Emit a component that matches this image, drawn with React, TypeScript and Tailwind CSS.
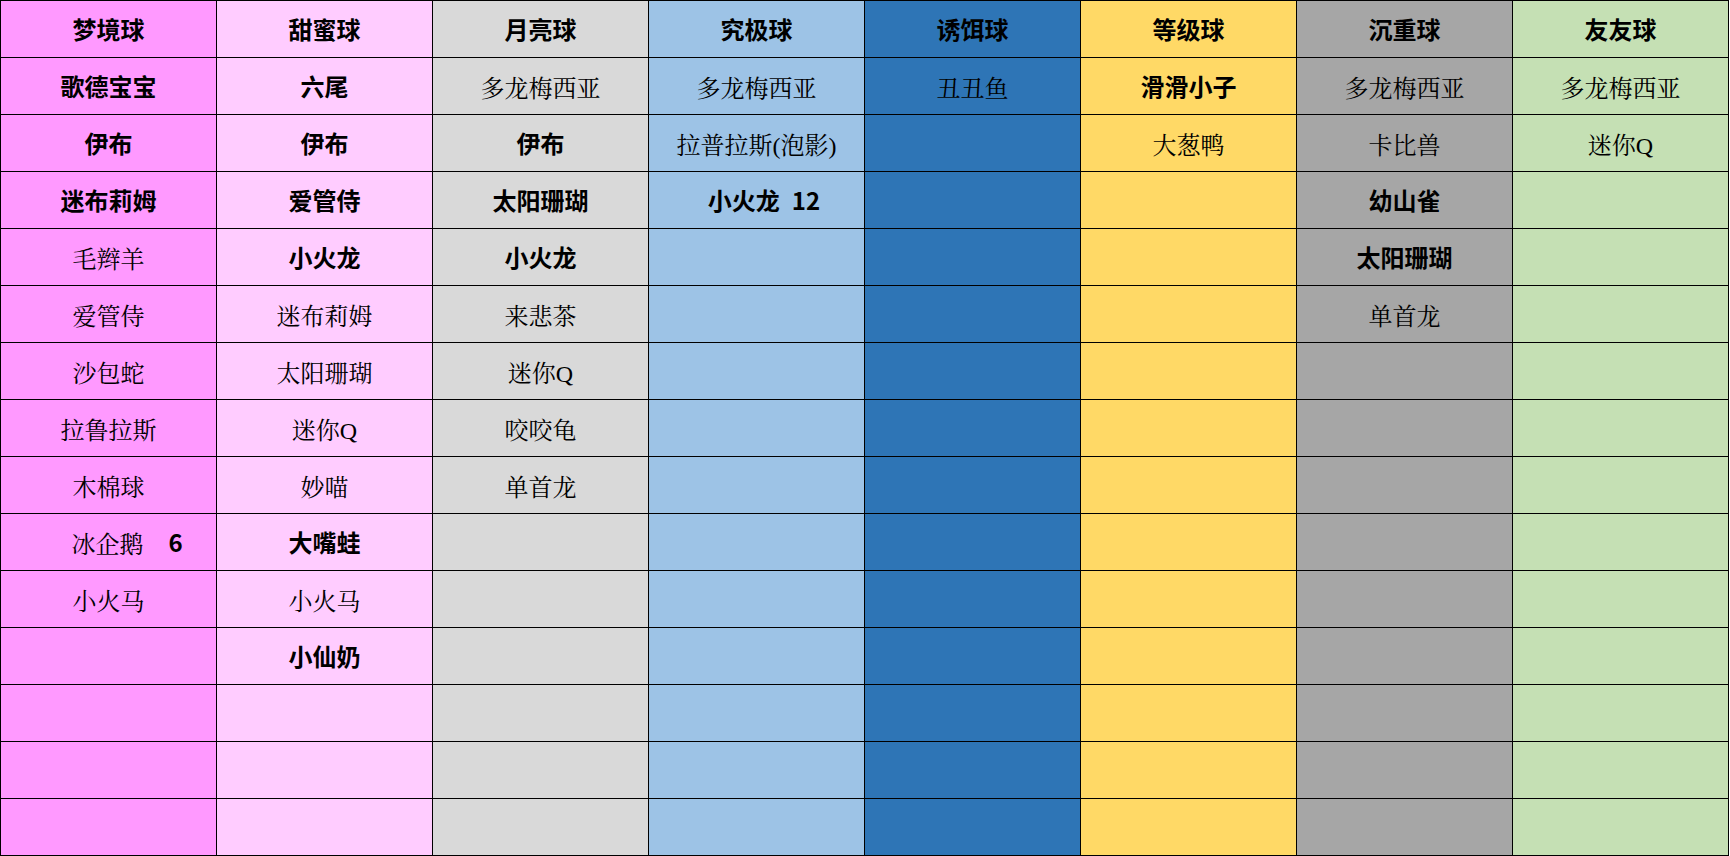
import React from "react";

type Cell = { t: string; b?: boolean; extra?: string; pl?: string };

const E: Cell = { t: "" };
const fill = (arr: Cell[]) => {
  const out = [...arr];
  while (out.length < 14) out.push(E);
  return out;
};

const columns: { head: string; bg: string; cells: Cell[] }[] = [
  {
    head: "梦境球",
    bg: "bg-[#ff99ff]",
    cells: fill([
      { t: "歌德宝宝", b: true },
      { t: "伊布", b: true },
      { t: "迷布莉姆", b: true },
      { t: "毛辫羊" },
      { t: "爱管侍" },
      { t: "沙包蛇" },
      { t: "拉鲁拉斯" },
      { t: "木棉球" },
      { t: "冰企鹅", extra: "6", pl: "pl-[37px]" },
      { t: "小火马" },
    ]),
  },
  {
    head: "甜蜜球",
    bg: "bg-[#ffccff]",
    cells: fill([
      { t: "六尾", b: true },
      { t: "伊布", b: true },
      { t: "爱管侍", b: true },
      { t: "小火龙", b: true },
      { t: "迷布莉姆" },
      { t: "太阳珊瑚" },
      { t: "迷你Q" },
      { t: "妙喵" },
      { t: "大嘴蛙", b: true },
      { t: "小火马" },
      { t: "小仙奶", b: true },
    ]),
  },
  {
    head: "月亮球",
    bg: "bg-[#d9d9d9]",
    cells: fill([
      { t: "多龙梅西亚" },
      { t: "伊布", b: true },
      { t: "太阳珊瑚", b: true },
      { t: "小火龙", b: true },
      { t: "来悲茶" },
      { t: "迷你Q" },
      { t: "咬咬龟" },
      { t: "单首龙" },
    ]),
  },
  {
    head: "究极球",
    bg: "bg-[#9dc3e6]",
    cells: fill([
      { t: "多龙梅西亚" },
      { t: "拉普拉斯(泡影)" },
      { t: "小火龙", b: true, extra: "12", pl: "pl-[15px]" },
    ]),
  },
  {
    head: "诱饵球",
    bg: "bg-[#2e75b6]",
    cells: fill([{ t: "丑丑鱼" }]),
  },
  {
    head: "等级球",
    bg: "bg-[#ffd966]",
    cells: fill([{ t: "滑滑小子", b: true }, { t: "大葱鸭" }]),
  },
  {
    head: "沉重球",
    bg: "bg-[#a6a6a6]",
    cells: fill([
      { t: "多龙梅西亚" },
      { t: "卡比兽" },
      { t: "幼山雀", b: true },
      { t: "太阳珊瑚", b: true },
      { t: "单首龙" },
    ]),
  },
  {
    head: "友友球",
    bg: "bg-[#c5e0b4]",
    cells: fill([{ t: "多龙梅西亚" }, { t: "迷你Q" }]),
  },
];

const boldFont = "font-['Noto_Sans_CJK_SC',sans-serif] font-bold pb-[5px]";
const serifFont =
  "font-['Liberation_Serif','Noto_Serif_CJK_SC','Noto_Sans_CJK_SC',serif] font-normal";

function CellView({ c, bg }: { c: Cell; bg: string }) {
  return (
    <div
      className={`${bg} flex items-center justify-center pt-[5px] text-[24px] leading-none text-black ${c.pl ?? ""}`}
    >
      <span className={c.b ? boldFont : serifFont}>{c.t}</span>
      {c.extra ? (
        <span className={`${boldFont} ${c.b ? "ml-[12px]" : "ml-[25px]"}`}>{c.extra}</span>
      ) : null}
    </div>
  );
}

export default function App() {
  const rows: React.ReactNode[] = [];
  columns.forEach((col, ci) => {
    rows.push(<CellView key={`h${ci}`} c={{ t: col.head, b: true }} bg={col.bg} />);
  });
  for (let r = 0; r < 14; r++) {
    columns.forEach((col, ci) => {
      rows.push(<CellView key={`${r}-${ci}`} c={col.cells[r]} bg={col.bg} />);
    });
  }
  return (
    <div className="min-h-[856px] w-[1730px] bg-white">
      <div className="grid w-fit grid-cols-[repeat(8,215px)] auto-rows-[56px] gap-px bg-black p-px">
        {rows}
      </div>
    </div>
  );
}
